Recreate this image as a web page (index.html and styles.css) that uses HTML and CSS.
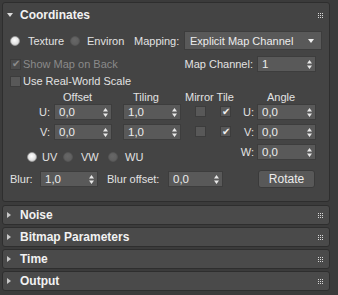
FILE: index.html
```html
<!DOCTYPE html>
<html lang="en">
  <head>
    <meta charset="UTF-8" />
    <title>Coordinates</title>
    <link rel="stylesheet" href="styles.css">
  </head>
  <body>
    <div class="rollout">
      <div class="rollout-head">
        <span class="arrow-down"></span>
        <span class="rollout-title">Coordinates</span>
        <svg class="grip" width="5" height="5" viewBox="0 0 5 5"><path d="M0 0h1v1H0zM2 0h1v1H2zM4 0h1v1H4zM0 2h1v1H0zM2 2h1v1H2zM4 2h1v1H4zM0 4h1v1H0zM2 4h1v1H2zM4 4h1v1H4z" fill="#d8d8d8"/></svg>
      </div>

      <div class="rollout-body">
        <!-- mapping -->
        <div class="row row-map">
          <span class="radio checked"></span>
          <span class="lbl lbl-texture">Texture</span>
          <span class="radio"></span>
          <span class="lbl lbl-environ">Environ</span>
          <span class="lbl lbl-mapping">Mapping:</span>
          <div class="dropdown">
            <span>Explicit Map Channel</span>
            <span class="drop-arrow"></span>
          </div>
        </div>

        <div class="row row-channel">
          <span class="check checked disabled"></span>
          <span class="lbl lbl-check disabled-text">Show Map on Back</span>
          <span class="lbl lbl-channel">Map Channel:</span>
          <div class="spinner spinner-channel"><span>1</span><svg class="spin" width="5" height="9" viewBox="0 0 5 9"><path d="M0 3.5L2.5 0L5 3.5zM0 5.5L2.5 9L5 5.5z" fill="#e8e8e8"/></svg></div>
        </div>

        <div class="row row-scale">
          <span class="check"></span>
          <span class="lbl lbl-check">Use Real-World Scale</span>
        </div>

        <!-- offset / tiling / angle -->
        <div class="uvw-grid">
          <span></span>
          <span class="col-head head-offset">Offset</span>
          <span></span>
          <span class="col-head head-tiling">Tiling</span>
          <span class="col-head head-mirror">Mirror Tile</span>
          <span></span>
          <span class="col-head head-angle">Angle</span>

          <span class="axis">U:</span>
          <div class="spinner"><span>0,0</span><svg class="spin" width="5" height="9" viewBox="0 0 5 9"><path d="M0 3.5L2.5 0L5 3.5zM0 5.5L2.5 9L5 5.5z" fill="#e8e8e8"/></svg></div>
          <span></span>
          <div class="spinner"><span>1,0</span><svg class="spin" width="5" height="9" viewBox="0 0 5 9"><path d="M0 3.5L2.5 0L5 3.5zM0 5.5L2.5 9L5 5.5z" fill="#e8e8e8"/></svg></div>
          <span></span>
          <span class="check"></span>
          <span></span>
          <span class="check checked"></span>
          <span class="axis axis-angle">U:</span>
          <div class="spinner"><span>0,0</span><svg class="spin" width="5" height="9" viewBox="0 0 5 9"><path d="M0 3.5L2.5 0L5 3.5zM0 5.5L2.5 9L5 5.5z" fill="#e8e8e8"/></svg></div>

          <span class="axis">V:</span>
          <div class="spinner"><span>0,0</span><svg class="spin" width="5" height="9" viewBox="0 0 5 9"><path d="M0 3.5L2.5 0L5 3.5zM0 5.5L2.5 9L5 5.5z" fill="#e8e8e8"/></svg></div>
          <span></span>
          <div class="spinner"><span>1,0</span><svg class="spin" width="5" height="9" viewBox="0 0 5 9"><path d="M0 3.5L2.5 0L5 3.5zM0 5.5L2.5 9L5 5.5z" fill="#e8e8e8"/></svg></div>
          <span></span>
          <span class="check"></span>
          <span></span>
          <span class="check checked"></span>
          <span class="axis axis-angle">V:</span>
          <div class="spinner"><span>0,0</span><svg class="spin" width="5" height="9" viewBox="0 0 5 9"><path d="M0 3.5L2.5 0L5 3.5zM0 5.5L2.5 9L5 5.5z" fill="#e8e8e8"/></svg></div>

          <div class="uv-group">
            <span class="radio checked"></span>
            <span class="lbl lbl-uv">UV</span>
            <span class="radio"></span>
            <span class="lbl lbl-vw">VW</span>
            <span class="radio"></span>
            <span class="lbl lbl-wu">WU</span>
          </div>
          <span class="axis axis-angle">W:</span>
          <div class="spinner"><span>0,0</span><svg class="spin" width="5" height="9" viewBox="0 0 5 9"><path d="M0 3.5L2.5 0L5 3.5zM0 5.5L2.5 9L5 5.5z" fill="#e8e8e8"/></svg></div>
        </div>

        <div class="row row-blur">
          <span class="lbl lbl-blur">Blur:</span>
          <div class="spinner"><span>1,0</span><svg class="spin" width="5" height="9" viewBox="0 0 5 9"><path d="M0 3.5L2.5 0L5 3.5zM0 5.5L2.5 9L5 5.5z" fill="#e8e8e8"/></svg></div>
          <span class="lbl lbl-bluroff">Blur offset:</span>
          <div class="spinner spinner-bluroff"><span>0,0</span><svg class="spin" width="5" height="9" viewBox="0 0 5 9"><path d="M0 3.5L2.5 0L5 3.5zM0 5.5L2.5 9L5 5.5z" fill="#e8e8e8"/></svg></div>
          <button class="btn-rotate">Rotate</button>
        </div>
      </div>
    </div>

    <div class="bar">
      <span class="arrow-right"></span>
      <span class="rollout-title">Noise</span>
      <svg class="grip" width="5" height="5" viewBox="0 0 5 5"><path d="M0 0h1v1H0zM2 0h1v1H2zM4 0h1v1H4zM0 2h1v1H0zM2 2h1v1H2zM4 2h1v1H4zM0 4h1v1H0zM2 4h1v1H2zM4 4h1v1H4z" fill="#d8d8d8"/></svg>
    </div>
    <div class="bar">
      <span class="arrow-right"></span>
      <span class="rollout-title">Bitmap Parameters</span>
      <svg class="grip" width="5" height="5" viewBox="0 0 5 5"><path d="M0 0h1v1H0zM2 0h1v1H2zM4 0h1v1H4zM0 2h1v1H0zM2 2h1v1H2zM4 2h1v1H4zM0 4h1v1H0zM2 4h1v1H2zM4 4h1v1H4z" fill="#d8d8d8"/></svg>
    </div>
    <div class="bar">
      <span class="arrow-right"></span>
      <span class="rollout-title">Time</span>
      <svg class="grip" width="5" height="5" viewBox="0 0 5 5"><path d="M0 0h1v1H0zM2 0h1v1H2zM4 0h1v1H4zM0 2h1v1H0zM2 2h1v1H2zM4 2h1v1H4zM0 4h1v1H0zM2 4h1v1H2zM4 4h1v1H4z" fill="#d8d8d8"/></svg>
    </div>
    <div class="bar">
      <span class="arrow-right"></span>
      <span class="rollout-title">Output</span>
      <svg class="grip" width="5" height="5" viewBox="0 0 5 5"><path d="M0 0h1v1H0zM2 0h1v1H2zM4 0h1v1H4zM0 2h1v1H0zM2 2h1v1H2zM4 2h1v1H4zM0 4h1v1H0zM2 4h1v1H2zM4 4h1v1H4z" fill="#d8d8d8"/></svg>
    </div>
  </body>
</html>
```

FILE: styles.css
```css
* {
  margin: 0;
  padding: 0;
  box-sizing: border-box;
}

body {
  background: #3b3b3b;
  padding: 2px 8px 0 2px;
  font-family: "Liberation Sans", Arial, sans-serif;
  font-size: 11px;
  color: #e2e2e2;
  height: 295px;
  overflow: hidden;
}

/* rollout panel */
.rollout {
  background: #444444;
  border: 1px solid #2e2e2e;
  border-radius: 3px;
  height: 200px;
}

.rollout-head {
  height: 24px;
  display: flex;
  align-items: center;
  padding: 0 6px 0 4px;
}

.arrow-down {
  width: 0;
  height: 0;
  border-left: 3px solid transparent;
  border-right: 3px solid transparent;
  border-top: 4px solid #dadada;
}

.arrow-right {
  width: 0;
  height: 0;
  border-top: 3px solid transparent;
  border-bottom: 3px solid transparent;
  border-left: 4px solid #c8c8c8;
}

.rollout-title {
  flex: 1;
  margin-left: 7px;
  font-size: 12px;
  font-weight: bold;
  color: #f2f2f2;
}

.bar .rollout-title {
  margin-left: 9px;
}

.grip {
  display: block;
}

.rollout-body {
  padding: 4px 7px 0 7px;
}

.row {
  display: flex;
  align-items: center;
}

.lbl {
  white-space: nowrap;
}

/* radios & checks */
.radio {
  width: 10px;
  height: 10px;
  border-radius: 50%;
  background: radial-gradient(circle at 45% 40%, #676767 0%, #5c5c5c 100%);
  border: 1px solid #555555;
  flex-shrink: 0;
}

.radio.checked {
  background: radial-gradient(circle at 45% 40%, #ffffff 0%, #e4e4e4 55%, #bdbdbd 100%);
  border-color: #9a9a9a;
}

.check {
  width: 11px;
  height: 11px;
  background: #585858;
  border: 1px solid #3c3c3c;
  flex-shrink: 0;
  display: flex;
  align-items: center;
  justify-content: center;
  font-size: 10px;
  line-height: 1;
  color: #f0f0f0;
}

.check.checked::after {
  content: "\2714";
}

.check.disabled {
  background: #4c4c4c;
  color: #8c8c8c;
}

.disabled-text {
  color: #8a8a8a;
}

/* row 1 */
.row-map {
  height: 19px;
}

.lbl-texture {
  width: 42px;
  margin-left: 8px;
}

.lbl-environ {
  width: 47px;
  margin-left: 7px;
}

.lbl-mapping {
  width: 50px;
}

.dropdown {
  width: 138px;
  height: 19px;
  background: #595959;
  border: 1px solid #3d3d3d;
  display: flex;
  align-items: center;
  justify-content: space-between;
  padding: 0 7px 0 5px;
  font-size: 11px;
  color: #ececec;
}

.drop-arrow {
  width: 0;
  height: 0;
  border-left: 3.5px solid transparent;
  border-right: 3.5px solid transparent;
  border-top: 4px solid #f0f0f0;
}

/* row 2 */
.row-channel {
  height: 16px;
  margin-top: 6px;
}

.lbl-check {
  margin-left: 2px;
}

.lbl-channel {
  margin-left: auto;
  margin-right: 4px;
}

.spinner {
  height: 16px;
  background: #595959;
  border: 1px solid #3d3d3d;
  display: flex;
  align-items: center;
  justify-content: space-between;
  padding: 0 3px 0 4px;
  color: #ececec;
  font-size: 11.5px;
}

.spin {
  display: block;
}

.spinner-channel {
  width: 59px;
  margin-right: 6px;
}

/* row 3 */
.row-scale {
  height: 14px;
  margin-top: 2px;
}

/* offset / tiling / angle table */
.uvw-grid {
  margin-top: 2px;
  display: grid;
  grid-template-columns: 44px 58px 11px 58px 14px 12px 13px 12px 25px 59px;
  grid-template-rows: 14px 20px 20px 16px;
  align-items: start;
}

.col-head {
  line-height: 14px;
  white-space: nowrap;
}

.head-offset {
  padding-left: 9px;
}

.head-tiling {
  padding-left: 10px;
}

.head-mirror {
  grid-column: 5 / 9;
  padding-left: 4px;
}

.head-angle {
  padding-left: 10px;
}

.axis {
  line-height: 16px;
  text-align: right;
  padding-right: 4px;
}

.axis-angle {
  padding-right: 3px;
}

.uvw-grid .check {
  margin-top: 2px;
}

.uv-group {
  grid-column: 1 / 9;
  align-self: end;
  margin-bottom: -3px;
  padding-left: 17px;
  display: flex;
  align-items: center;
  height: 12px;
}

.lbl-uv {
  margin-left: 5px;
  width: 21px;
}

.lbl-vw {
  margin-left: 8px;
  width: 27px;
}

.lbl-wu {
  margin-left: 7px;
}

/* blur row */
.row-blur {
  height: 18px;
  margin-top: 10px;
}

.row-blur .spinner {
  width: 58px;
}

.lbl-blur {
  width: 30px;
}

.lbl-bluroff {
  width: 61px;
  margin-left: 9px;
}

.row-blur .spinner-bluroff {
  width: 55px;
}

.btn-rotate {
  margin-left: auto;
  margin-right: 7px;
  width: 57px;
  height: 18px;
  background: #585858;
  border: 1px solid #3a3a3a;
  border-radius: 3px;
  color: #ececec;
  font-family: inherit;
  font-size: 12px;
}

/* collapsed rollouts */
.bar {
  margin-top: 2px;
  height: 20px;
  background: #4a4a4a;
  border: 1px solid #2e2e2e;
  border-radius: 3px;
  display: flex;
  align-items: center;
  padding: 0 6px 0 4px;
}

.rollout + .bar {
  margin-top: 3px;
}
```
